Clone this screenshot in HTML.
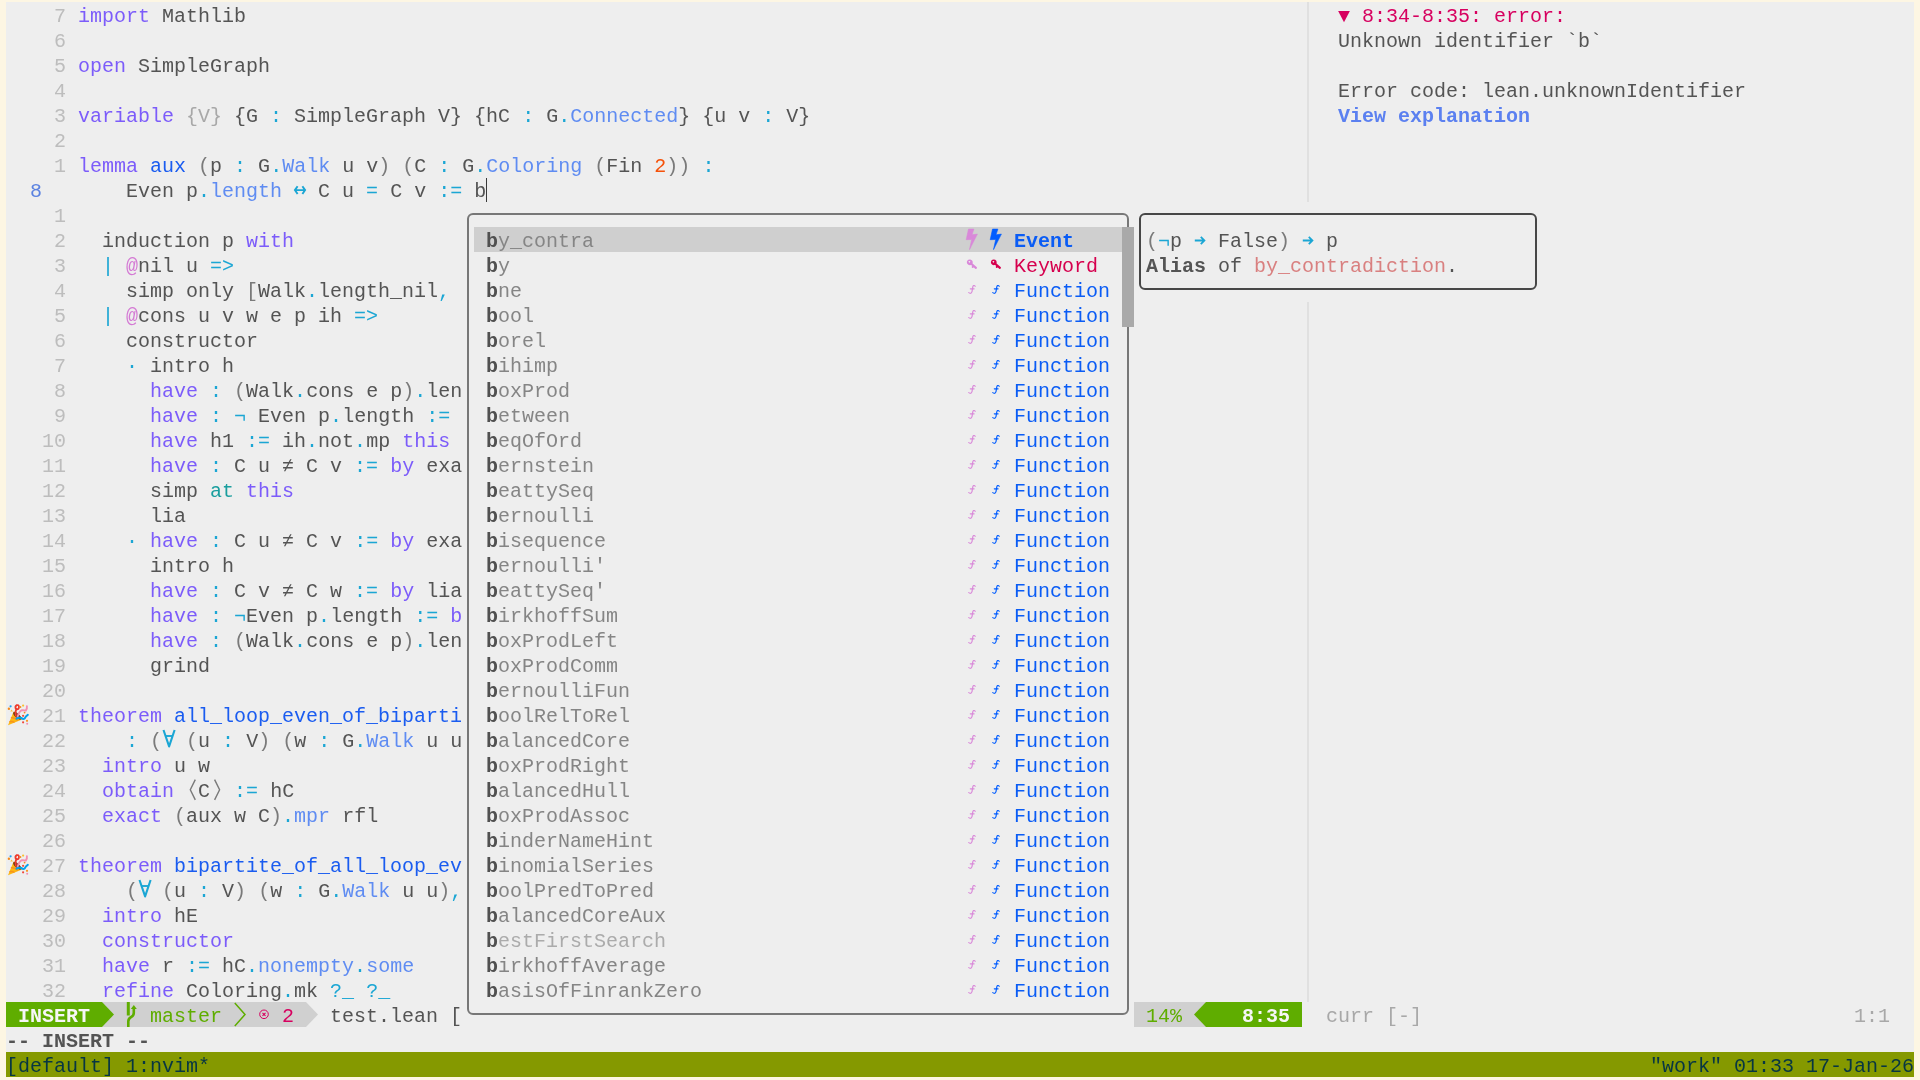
<!DOCTYPE html><html><head><meta charset="utf-8"><style>
html,body{margin:0;padding:0}
body{width:1920px;height:1080px;background:#fdf6e3;position:relative;overflow:hidden;font-family:"Liberation Mono",monospace;font-size:20px;-webkit-font-smoothing:antialiased}
#t{position:absolute;left:6px;top:2px;width:1908px;height:1075px;background:#eeeeee}
.r{position:absolute;will-change:transform;height:25px;line-height:25px;padding-top:2px;box-sizing:border-box;white-space:pre;color:#545454}
b{font-weight:normal}
.ov,.blk,.box{position:absolute}.ov{overflow:visible}
.box{border:2px solid #777;border-radius:6px;background:transparent}
.ln{color:#bdbdbd}.cur{color:#5b82e0}
.k{color:#7c5cfa}.d{color:#1a5cf0}.f{color:#5f8cf2}.o{color:#1ba6d4}.p{color:#7a7a7a}.u{color:#a8a8a8}
.N{color:#f5520a}.a{color:#d47ad4}.t{color:#1a9e9e}
.e{color:#d7005f}.vb{color:#5b80f0;font-weight:bold}
.cb{color:#505050;font-weight:bold}.ci{color:#858585}.ci2{color:#ababab}
.ev{color:#0a5cf5;font-weight:bold}.kw{color:#d6004e}.fn{color:#0a5cf5}
.B{font-weight:bold}.rr{color:#d98080}
.sw{color:#f6f6f6;font-weight:bold}.sg{color:#5fad00}.sr{color:#d7005f}.sx{color:#a8a8a8}
.tm{color:#073642}
</style></head><body><div id="t"></div>
<div class="r" style="left:78px;top:2px"><b class="k">import</b> Mathlib</div>
<div class="r" style="left:78px;top:52px"><b class="k">open</b> SimpleGraph</div>
<div class="r" style="left:78px;top:102px"><b class="k">variable</b> <b class="u">{V}</b> {G <b class="o">:</b> SimpleGraph V} {hC <b class="o">:</b> G<b class="o">.</b><b class="f">Connected</b>} {u v <b class="o">:</b> V}</div>
<div class="r" style="left:78px;top:152px"><b class="k">lemma</b> <b class="d">aux</b> <b class="p">(</b>p <b class="o">:</b> G<b class="o">.</b><b class="f">Walk</b> u v<b class="p">)</b> <b class="p">(</b>C <b class="o">:</b> G<b class="o">.</b><b class="f">Coloring</b> <b class="p">(</b>Fin <b class="N">2</b><b class="p">))</b> <b class="o">:</b></div>
<div class="r" style="left:78px;top:177px">    Even p<b class="o">.</b><b class="f">length</b> <b class="o"> </b> C u <b class="o">=</b> C v <b class="o">:=</b> b</div>
<div class="r" style="left:78px;top:227px">  induction p <b class="k">with</b></div>
<div class="r" style="left:78px;top:252px">  <b class="o">|</b> <b class="a">@</b>nil u <b class="o">=&gt;</b></div>
<div class="r" style="left:78px;top:277px">    simp only <b class="p">[</b>Walk<b class="o">.</b>length_nil<b class="o">,</b></div>
<div class="r" style="left:78px;top:302px">  <b class="o">|</b> <b class="a">@</b>cons u v w e p ih <b class="o">=&gt;</b></div>
<div class="r" style="left:78px;top:327px">    constructor</div>
<div class="r" style="left:78px;top:352px">    <b class="o">·</b> intro h</div>
<div class="r" style="left:78px;top:377px">      <b class="k">have</b> <b class="o">:</b> <b class="p">(</b>Walk<b class="o">.</b>cons e p<b class="p">)</b><b class="o">.</b>len</div>
<div class="r" style="left:78px;top:402px">      <b class="k">have</b> <b class="o">:</b> <b class="o">¬</b> Even p<b class="o">.</b>length <b class="o">:=</b></div>
<div class="r" style="left:78px;top:427px">      <b class="k">have</b> h1 <b class="o">:=</b> ih<b class="o">.</b>not<b class="o">.</b>mp <b class="k">this</b></div>
<div class="r" style="left:78px;top:452px">      <b class="k">have</b> <b class="o">:</b> C u ≠ C v <b class="o">:=</b> <b class="k">by</b> exa</div>
<div class="r" style="left:78px;top:477px">      simp <b class="t">at</b> <b class="k">this</b></div>
<div class="r" style="left:78px;top:502px">      lia</div>
<div class="r" style="left:78px;top:527px">    <b class="o">·</b> <b class="k">have</b> <b class="o">:</b> C u ≠ C v <b class="o">:=</b> <b class="k">by</b> exa</div>
<div class="r" style="left:78px;top:552px">      intro h</div>
<div class="r" style="left:78px;top:577px">      <b class="k">have</b> <b class="o">:</b> C v ≠ C w <b class="o">:=</b> <b class="k">by</b> lia</div>
<div class="r" style="left:78px;top:602px">      <b class="k">have</b> <b class="o">:</b> <b class="o">¬</b>Even p<b class="o">.</b>length <b class="o">:=</b> <b class="k">b</b></div>
<div class="r" style="left:78px;top:627px">      <b class="k">have</b> <b class="o">:</b> <b class="p">(</b>Walk<b class="o">.</b>cons e p<b class="p">)</b><b class="o">.</b>len</div>
<div class="r" style="left:78px;top:652px">      grind</div>
<div class="r" style="left:78px;top:702px"><b class="k">theorem</b> <b class="d">all_loop_even_of_biparti</b></div>
<div class="r" style="left:78px;top:727px">    <b class="o">:</b> <b class="p">(</b>  <b class="p">(</b>u <b class="o">:</b> V<b class="p">)</b> <b class="p">(</b>w <b class="o">:</b> G<b class="o">.</b><b class="f">Walk</b> u u</div>
<div class="r" style="left:78px;top:752px">  <b class="k">intro</b> u w</div>
<div class="r" style="left:78px;top:777px">  <b class="k">obtain</b> <b class="p"> </b>C<b class="p"> </b> <b class="o">:=</b> hC</div>
<div class="r" style="left:78px;top:802px">  <b class="k">exact</b> <b class="p">(</b>aux w C<b class="p">)</b><b class="o">.</b><b class="f">mpr</b> rfl</div>
<div class="r" style="left:78px;top:852px"><b class="k">theorem</b> <b class="d">bipartite_of_all_loop_ev</b></div>
<div class="r" style="left:78px;top:877px">    <b class="p">(</b>  <b class="p">(</b>u <b class="o">:</b> V<b class="p">)</b> <b class="p">(</b>w <b class="o">:</b> G<b class="o">.</b><b class="f">Walk</b> u u<b class="p">)</b><b class="o">,</b></div>
<div class="r" style="left:78px;top:902px">  <b class="k">intro</b> hE</div>
<div class="r" style="left:78px;top:927px">  <b class="k">constructor</b></div>
<div class="r" style="left:78px;top:952px">  <b class="k">have</b> r <b class="o">:=</b> hC<b class="o">.</b><b class="f">nonempty</b><b class="o">.</b><b class="f">some</b></div>
<div class="r" style="left:78px;top:977px">  <b class="k">refine</b> Coloring<b class="o">.</b>mk <b class="o">?_</b> <b class="o">?_</b></div>
<div class="r ln" style="left:54px;top:2px">7</div>
<div class="r ln" style="left:54px;top:27px">6</div>
<div class="r ln" style="left:54px;top:52px">5</div>
<div class="r ln" style="left:54px;top:77px">4</div>
<div class="r ln" style="left:54px;top:102px">3</div>
<div class="r ln" style="left:54px;top:127px">2</div>
<div class="r ln" style="left:54px;top:152px">1</div>
<div class="r ln" style="left:54px;top:202px">1</div>
<div class="r ln" style="left:54px;top:227px">2</div>
<div class="r ln" style="left:54px;top:252px">3</div>
<div class="r ln" style="left:54px;top:277px">4</div>
<div class="r ln" style="left:54px;top:302px">5</div>
<div class="r ln" style="left:54px;top:327px">6</div>
<div class="r ln" style="left:54px;top:352px">7</div>
<div class="r ln" style="left:54px;top:377px">8</div>
<div class="r ln" style="left:54px;top:402px">9</div>
<div class="r ln" style="left:42px;top:427px">10</div>
<div class="r ln" style="left:42px;top:452px">11</div>
<div class="r ln" style="left:42px;top:477px">12</div>
<div class="r ln" style="left:42px;top:502px">13</div>
<div class="r ln" style="left:42px;top:527px">14</div>
<div class="r ln" style="left:42px;top:552px">15</div>
<div class="r ln" style="left:42px;top:577px">16</div>
<div class="r ln" style="left:42px;top:602px">17</div>
<div class="r ln" style="left:42px;top:627px">18</div>
<div class="r ln" style="left:42px;top:652px">19</div>
<div class="r ln" style="left:42px;top:677px">20</div>
<div class="r ln" style="left:42px;top:702px">21</div>
<div class="r ln" style="left:42px;top:727px">22</div>
<div class="r ln" style="left:42px;top:752px">23</div>
<div class="r ln" style="left:42px;top:777px">24</div>
<div class="r ln" style="left:42px;top:802px">25</div>
<div class="r ln" style="left:42px;top:827px">26</div>
<div class="r ln" style="left:42px;top:852px">27</div>
<div class="r ln" style="left:42px;top:877px">28</div>
<div class="r ln" style="left:42px;top:902px">29</div>
<div class="r ln" style="left:42px;top:927px">30</div>
<div class="r ln" style="left:42px;top:952px">31</div>
<div class="r ln" style="left:42px;top:977px">32</div>
<div class="r cur" style="left:30px;top:177px">8</div>
<svg class="ov" style="left:162px;top:727px;" width="12" height="25" viewBox="0 0 12 25"><path d="M1.5 3 L7.1 19.4 L12.6 3" fill="none" stroke="#1ba6d4" stroke-width="2.1" stroke-linejoin="round"/><path d="M3.8 9 H10" stroke="#1ba6d4" stroke-width="1.9"/></svg>
<svg class="ov" style="left:138px;top:877px;" width="12" height="25" viewBox="0 0 12 25"><path d="M1.5 3 L7.1 19.4 L12.6 3" fill="none" stroke="#1ba6d4" stroke-width="2.1" stroke-linejoin="round"/><path d="M3.8 9 H10" stroke="#1ba6d4" stroke-width="1.9"/></svg>
<svg class="ov" style="left:186px;top:777px;" width="12" height="25" viewBox="0 0 12 25"><path d="M9.3 2.6 L4.3 12.75 L9.3 22.9" fill="none" stroke="#7a7a7a" stroke-width="1.4"/></svg>
<svg class="ov" style="left:210px;top:777px;" width="12" height="25" viewBox="0 0 12 25"><path d="M4.6 2.6 L9.6 12.75 L4.6 22.9" fill="none" stroke="#7a7a7a" stroke-width="1.4"/></svg>
<svg class="ov" style="left:294px;top:177px;" width="12" height="25" viewBox="0 0 12 25"><path d="M3.6 9.2 L0.9 13.1 L3.6 17 M8.4 9.2 L11.1 13.1 L8.4 17 M1.2 13.1 H10.8" fill="none" stroke="#1ba6d4" stroke-width="1.9"/></svg>
<svg class="ov" style="left:1194px;top:227px;" width="12" height="25" viewBox="0 0 12 25"><path d="M0.8 13.5 H10.3 M6.8 9.9 L10.4 13.5 L6.8 17.1" fill="none" stroke="#1ba6d4" stroke-width="1.8"/></svg>
<svg class="ov" style="left:1302px;top:227px;" width="12" height="25" viewBox="0 0 12 25"><path d="M0.8 13.5 H10.3 M6.8 9.9 L10.4 13.5 L6.8 17.1" fill="none" stroke="#1ba6d4" stroke-width="1.8"/></svg>
<div class="blk" style="left:486px;top:178px;width:1px;height:24px;background:#3a3a3a"></div>
<svg class="ov" style="left:6px;top:702px;" width="25" height="25" viewBox="0 0 25 25">
<path d="M2 23.2 L7.6 9.6 Q12.6 11.5 16 17.6 Z" fill="#fdb813"/>
<path d="M3.4 19.8 Q6 19 8.5 20.3 M4.9 15.8 Q8.5 15 11.8 18.5" stroke="#f7931e" stroke-width="1.5" fill="none"/>
<ellipse cx="11.3" cy="13.8" rx="5.2" ry="2.1" transform="rotate(43 11.3 13.8)" fill="#6d3b16"/>
<path d="M9.8 13.5 Q9 10 10.2 7.5 Q8.5 4.5 10.5 3.2 Q12.8 2.6 13 5 Q12.8 7.5 10.8 7.2" stroke="#ee3a2c" stroke-width="1.8" fill="none" stroke-linecap="round"/>
<path d="M11.5 15 Q13 9.5 15.5 8.3 Q18 8 19.8 8.6 Q21.3 7 20.9 4.2" stroke="#f48fb1" stroke-width="1.9" fill="none" stroke-linecap="round"/>
<path d="M10.5 16.6 Q13 15.3 15 15.9 Q17.3 17.6 18.6 16.4 Q19.8 14.2 21.8 12.9" stroke="#03a1ec" stroke-width="2" fill="none" stroke-linecap="round"/>
<circle cx="4.6" cy="4.3" r="1.1" fill="#1e9ff0"/>
<circle cx="2.9" cy="6.8" r="1.2" fill="#f58b1e"/>
<path d="M4.3 9.6 L5.6 7.6 L6.9 9.6 Z" fill="#fbc02d"/>
<circle cx="14.4" cy="5.1" r="1" fill="#f58b1e"/>
<circle cx="17.1" cy="3.6" r="1.1" fill="#fbc02d"/>
<circle cx="18.6" cy="10.6" r="0.9" fill="#f58b1e"/>
<circle cx="17.1" cy="13.8" r="1.1" fill="#ef4a3d"/>
<circle cx="17.1" cy="20.3" r="1.1" fill="#ef4a3d"/>
<circle cx="21" cy="18.8" r="1.1" fill="#f7901e"/>
<circle cx="21.2" cy="21.8" r="1" fill="#f28bb5"/>
</svg>
<svg class="ov" style="left:6px;top:852px;" width="25" height="25" viewBox="0 0 25 25">
<path d="M2 23.2 L7.6 9.6 Q12.6 11.5 16 17.6 Z" fill="#fdb813"/>
<path d="M3.4 19.8 Q6 19 8.5 20.3 M4.9 15.8 Q8.5 15 11.8 18.5" stroke="#f7931e" stroke-width="1.5" fill="none"/>
<ellipse cx="11.3" cy="13.8" rx="5.2" ry="2.1" transform="rotate(43 11.3 13.8)" fill="#6d3b16"/>
<path d="M9.8 13.5 Q9 10 10.2 7.5 Q8.5 4.5 10.5 3.2 Q12.8 2.6 13 5 Q12.8 7.5 10.8 7.2" stroke="#ee3a2c" stroke-width="1.8" fill="none" stroke-linecap="round"/>
<path d="M11.5 15 Q13 9.5 15.5 8.3 Q18 8 19.8 8.6 Q21.3 7 20.9 4.2" stroke="#f48fb1" stroke-width="1.9" fill="none" stroke-linecap="round"/>
<path d="M10.5 16.6 Q13 15.3 15 15.9 Q17.3 17.6 18.6 16.4 Q19.8 14.2 21.8 12.9" stroke="#03a1ec" stroke-width="2" fill="none" stroke-linecap="round"/>
<circle cx="4.6" cy="4.3" r="1.1" fill="#1e9ff0"/>
<circle cx="2.9" cy="6.8" r="1.2" fill="#f58b1e"/>
<path d="M4.3 9.6 L5.6 7.6 L6.9 9.6 Z" fill="#fbc02d"/>
<circle cx="14.4" cy="5.1" r="1" fill="#f58b1e"/>
<circle cx="17.1" cy="3.6" r="1.1" fill="#fbc02d"/>
<circle cx="18.6" cy="10.6" r="0.9" fill="#f58b1e"/>
<circle cx="17.1" cy="13.8" r="1.1" fill="#ef4a3d"/>
<circle cx="17.1" cy="20.3" r="1.1" fill="#ef4a3d"/>
<circle cx="21" cy="18.8" r="1.1" fill="#f7901e"/>
<circle cx="21.2" cy="21.8" r="1" fill="#f28bb5"/>
</svg>
<div class="blk" style="left:1307px;top:2px;width:2px;height:200px;background:#e0e0e0"></div>
<div class="blk" style="left:1307px;top:302px;width:2px;height:700px;background:#e0e0e0"></div>
<div class="r" style="left:1338px;top:2px"><b class="e">▼ 8:34-8:35: error:</b></div>
<div class="r" style="left:1338px;top:27px">Unknown identifier `b`</div>
<div class="r" style="left:1338px;top:77px">Error code: lean.unknownIdentifier</div>
<div class="r" style="left:1338px;top:102px"><b class="vb">View explanation</b></div>
<div class="blk" style="left:462px;top:202px;width:672px;height:825px;background:#eeeeee"></div>
<div class="box" style="left:467px;top:213px;width:658px;height:798px;border-color:#777777"></div>
<div class="blk" style="left:474px;top:227px;width:648px;height:25px;background:#cfcfcf"></div>
<div class="blk" style="left:1122px;top:227px;width:12px;height:100px;background:#a9a9a9"></div>
<div class="r" style="left:486px;top:227px"><b class="cb">b</b><b class="ci">y_contra</b></div>
<div class="r" style="left:1014px;top:227px"><b class="ev">Event</b></div>
<div class="r" style="left:486px;top:252px"><b class="cb">b</b><b class="ci">y</b></div>
<div class="r" style="left:1014px;top:252px"><b class="kw">Keyword</b></div>
<div class="r" style="left:486px;top:277px"><b class="cb">b</b><b class="ci">ne</b></div>
<div class="r" style="left:1014px;top:277px"><b class="fn">Function</b></div>
<div class="r" style="left:486px;top:302px"><b class="cb">b</b><b class="ci">ool</b></div>
<div class="r" style="left:1014px;top:302px"><b class="fn">Function</b></div>
<div class="r" style="left:486px;top:327px"><b class="cb">b</b><b class="ci">orel</b></div>
<div class="r" style="left:1014px;top:327px"><b class="fn">Function</b></div>
<div class="r" style="left:486px;top:352px"><b class="cb">b</b><b class="ci">ihimp</b></div>
<div class="r" style="left:1014px;top:352px"><b class="fn">Function</b></div>
<div class="r" style="left:486px;top:377px"><b class="cb">b</b><b class="ci">oxProd</b></div>
<div class="r" style="left:1014px;top:377px"><b class="fn">Function</b></div>
<div class="r" style="left:486px;top:402px"><b class="cb">b</b><b class="ci">etween</b></div>
<div class="r" style="left:1014px;top:402px"><b class="fn">Function</b></div>
<div class="r" style="left:486px;top:427px"><b class="cb">b</b><b class="ci">eqOfOrd</b></div>
<div class="r" style="left:1014px;top:427px"><b class="fn">Function</b></div>
<div class="r" style="left:486px;top:452px"><b class="cb">b</b><b class="ci">ernstein</b></div>
<div class="r" style="left:1014px;top:452px"><b class="fn">Function</b></div>
<div class="r" style="left:486px;top:477px"><b class="cb">b</b><b class="ci">eattySeq</b></div>
<div class="r" style="left:1014px;top:477px"><b class="fn">Function</b></div>
<div class="r" style="left:486px;top:502px"><b class="cb">b</b><b class="ci">ernoulli</b></div>
<div class="r" style="left:1014px;top:502px"><b class="fn">Function</b></div>
<div class="r" style="left:486px;top:527px"><b class="cb">b</b><b class="ci">isequence</b></div>
<div class="r" style="left:1014px;top:527px"><b class="fn">Function</b></div>
<div class="r" style="left:486px;top:552px"><b class="cb">b</b><b class="ci">ernoulli&#x27;</b></div>
<div class="r" style="left:1014px;top:552px"><b class="fn">Function</b></div>
<div class="r" style="left:486px;top:577px"><b class="cb">b</b><b class="ci">eattySeq&#x27;</b></div>
<div class="r" style="left:1014px;top:577px"><b class="fn">Function</b></div>
<div class="r" style="left:486px;top:602px"><b class="cb">b</b><b class="ci">irkhoffSum</b></div>
<div class="r" style="left:1014px;top:602px"><b class="fn">Function</b></div>
<div class="r" style="left:486px;top:627px"><b class="cb">b</b><b class="ci">oxProdLeft</b></div>
<div class="r" style="left:1014px;top:627px"><b class="fn">Function</b></div>
<div class="r" style="left:486px;top:652px"><b class="cb">b</b><b class="ci">oxProdComm</b></div>
<div class="r" style="left:1014px;top:652px"><b class="fn">Function</b></div>
<div class="r" style="left:486px;top:677px"><b class="cb">b</b><b class="ci">ernoulliFun</b></div>
<div class="r" style="left:1014px;top:677px"><b class="fn">Function</b></div>
<div class="r" style="left:486px;top:702px"><b class="cb">b</b><b class="ci">oolRelToRel</b></div>
<div class="r" style="left:1014px;top:702px"><b class="fn">Function</b></div>
<div class="r" style="left:486px;top:727px"><b class="cb">b</b><b class="ci">alancedCore</b></div>
<div class="r" style="left:1014px;top:727px"><b class="fn">Function</b></div>
<div class="r" style="left:486px;top:752px"><b class="cb">b</b><b class="ci">oxProdRight</b></div>
<div class="r" style="left:1014px;top:752px"><b class="fn">Function</b></div>
<div class="r" style="left:486px;top:777px"><b class="cb">b</b><b class="ci">alancedHull</b></div>
<div class="r" style="left:1014px;top:777px"><b class="fn">Function</b></div>
<div class="r" style="left:486px;top:802px"><b class="cb">b</b><b class="ci">oxProdAssoc</b></div>
<div class="r" style="left:1014px;top:802px"><b class="fn">Function</b></div>
<div class="r" style="left:486px;top:827px"><b class="cb">b</b><b class="ci">inderNameHint</b></div>
<div class="r" style="left:1014px;top:827px"><b class="fn">Function</b></div>
<div class="r" style="left:486px;top:852px"><b class="cb">b</b><b class="ci">inomialSeries</b></div>
<div class="r" style="left:1014px;top:852px"><b class="fn">Function</b></div>
<div class="r" style="left:486px;top:877px"><b class="cb">b</b><b class="ci">oolPredToPred</b></div>
<div class="r" style="left:1014px;top:877px"><b class="fn">Function</b></div>
<div class="r" style="left:486px;top:902px"><b class="cb">b</b><b class="ci">alancedCoreAux</b></div>
<div class="r" style="left:1014px;top:902px"><b class="fn">Function</b></div>
<div class="r" style="left:486px;top:927px"><b class="cb">b</b><b class="ci2">estFirstSearch</b></div>
<div class="r" style="left:1014px;top:927px"><b class="fn">Function</b></div>
<div class="r" style="left:486px;top:952px"><b class="cb">b</b><b class="ci">irkhoffAverage</b></div>
<div class="r" style="left:1014px;top:952px"><b class="fn">Function</b></div>
<div class="r" style="left:486px;top:977px"><b class="cb">b</b><b class="ci">asisOfFinrankZero</b></div>
<div class="r" style="left:1014px;top:977px"><b class="fn">Function</b></div>
<svg class="ov" style="left:966px;top:227px" width="12" height="25" viewBox="0 0 12 25"><path d="M2.5 2.1 L7.9 2.1 L6 7.8 L11.4 7.1 L3.5 22.6 L5.7 12.5 L0.2 12.7 Z" fill="#d988d9" stroke="#d988d9" stroke-width="0.6" stroke-linejoin="round"/></svg>
<svg class="ov" style="left:990px;top:227px" width="12" height="25" viewBox="0 0 12 25"><path d="M2.5 2.1 L7.9 2.1 L6 7.8 L11.4 7.1 L3.5 22.6 L5.7 12.5 L0.2 12.7 Z" fill="#005cff" stroke="#005cff" stroke-width="0.6" stroke-linejoin="round"/></svg>
<svg class="ov" style="left:966px;top:252px" width="12" height="25" viewBox="0 0 12 25"><path fill-rule="evenodd" d="M3.8 7.4 A2.9 2.9 0 1 1 3.79 7.4 Z M3.4 8.9 A0.8 0.8 0 1 0 3.41 8.9 Z" fill="#d988d9"/><path d="M5 11.5 L9.9 15.9 M7.6 13.8 L6.8 14.9" fill="none" stroke="#d988d9" stroke-width="2.1" stroke-linecap="round"/></svg>
<svg class="ov" style="left:990px;top:252px" width="12" height="25" viewBox="0 0 12 25"><path fill-rule="evenodd" d="M3.8 7.4 A2.9 2.9 0 1 1 3.79 7.4 Z M3.4 8.9 A0.8 0.8 0 1 0 3.41 8.9 Z" fill="#d6004e"/><path d="M5 11.5 L9.9 15.9 M7.6 13.8 L6.8 14.9" fill="none" stroke="#d6004e" stroke-width="2.1" stroke-linecap="round"/></svg>
<svg class="ov" style="left:966px;top:277px" width="12" height="25" viewBox="0 0 12 25"><path d="M9.2 9.3 Q8.6 8.3 7.6 8.6 Q6.9 9 6.7 10.3 L6 14.6 Q5.6 16.4 4.2 16.3 Q3.3 16.2 2.8 15.5 M4.3 11.8 H8.1" fill="none" stroke="#d988d9" stroke-width="1.15" stroke-linecap="round"/></svg>
<svg class="ov" style="left:990px;top:277px" width="12" height="25" viewBox="0 0 12 25"><path d="M9.2 9.3 Q8.6 8.3 7.6 8.6 Q6.9 9 6.7 10.3 L6 14.6 Q5.6 16.4 4.2 16.3 Q3.3 16.2 2.8 15.5 M4.3 11.8 H8.1" fill="none" stroke="#005cff" stroke-width="1.15" stroke-linecap="round"/></svg>
<svg class="ov" style="left:966px;top:302px" width="12" height="25" viewBox="0 0 12 25"><path d="M9.2 9.3 Q8.6 8.3 7.6 8.6 Q6.9 9 6.7 10.3 L6 14.6 Q5.6 16.4 4.2 16.3 Q3.3 16.2 2.8 15.5 M4.3 11.8 H8.1" fill="none" stroke="#d988d9" stroke-width="1.15" stroke-linecap="round"/></svg>
<svg class="ov" style="left:990px;top:302px" width="12" height="25" viewBox="0 0 12 25"><path d="M9.2 9.3 Q8.6 8.3 7.6 8.6 Q6.9 9 6.7 10.3 L6 14.6 Q5.6 16.4 4.2 16.3 Q3.3 16.2 2.8 15.5 M4.3 11.8 H8.1" fill="none" stroke="#005cff" stroke-width="1.15" stroke-linecap="round"/></svg>
<svg class="ov" style="left:966px;top:327px" width="12" height="25" viewBox="0 0 12 25"><path d="M9.2 9.3 Q8.6 8.3 7.6 8.6 Q6.9 9 6.7 10.3 L6 14.6 Q5.6 16.4 4.2 16.3 Q3.3 16.2 2.8 15.5 M4.3 11.8 H8.1" fill="none" stroke="#d988d9" stroke-width="1.15" stroke-linecap="round"/></svg>
<svg class="ov" style="left:990px;top:327px" width="12" height="25" viewBox="0 0 12 25"><path d="M9.2 9.3 Q8.6 8.3 7.6 8.6 Q6.9 9 6.7 10.3 L6 14.6 Q5.6 16.4 4.2 16.3 Q3.3 16.2 2.8 15.5 M4.3 11.8 H8.1" fill="none" stroke="#005cff" stroke-width="1.15" stroke-linecap="round"/></svg>
<svg class="ov" style="left:966px;top:352px" width="12" height="25" viewBox="0 0 12 25"><path d="M9.2 9.3 Q8.6 8.3 7.6 8.6 Q6.9 9 6.7 10.3 L6 14.6 Q5.6 16.4 4.2 16.3 Q3.3 16.2 2.8 15.5 M4.3 11.8 H8.1" fill="none" stroke="#d988d9" stroke-width="1.15" stroke-linecap="round"/></svg>
<svg class="ov" style="left:990px;top:352px" width="12" height="25" viewBox="0 0 12 25"><path d="M9.2 9.3 Q8.6 8.3 7.6 8.6 Q6.9 9 6.7 10.3 L6 14.6 Q5.6 16.4 4.2 16.3 Q3.3 16.2 2.8 15.5 M4.3 11.8 H8.1" fill="none" stroke="#005cff" stroke-width="1.15" stroke-linecap="round"/></svg>
<svg class="ov" style="left:966px;top:377px" width="12" height="25" viewBox="0 0 12 25"><path d="M9.2 9.3 Q8.6 8.3 7.6 8.6 Q6.9 9 6.7 10.3 L6 14.6 Q5.6 16.4 4.2 16.3 Q3.3 16.2 2.8 15.5 M4.3 11.8 H8.1" fill="none" stroke="#d988d9" stroke-width="1.15" stroke-linecap="round"/></svg>
<svg class="ov" style="left:990px;top:377px" width="12" height="25" viewBox="0 0 12 25"><path d="M9.2 9.3 Q8.6 8.3 7.6 8.6 Q6.9 9 6.7 10.3 L6 14.6 Q5.6 16.4 4.2 16.3 Q3.3 16.2 2.8 15.5 M4.3 11.8 H8.1" fill="none" stroke="#005cff" stroke-width="1.15" stroke-linecap="round"/></svg>
<svg class="ov" style="left:966px;top:402px" width="12" height="25" viewBox="0 0 12 25"><path d="M9.2 9.3 Q8.6 8.3 7.6 8.6 Q6.9 9 6.7 10.3 L6 14.6 Q5.6 16.4 4.2 16.3 Q3.3 16.2 2.8 15.5 M4.3 11.8 H8.1" fill="none" stroke="#d988d9" stroke-width="1.15" stroke-linecap="round"/></svg>
<svg class="ov" style="left:990px;top:402px" width="12" height="25" viewBox="0 0 12 25"><path d="M9.2 9.3 Q8.6 8.3 7.6 8.6 Q6.9 9 6.7 10.3 L6 14.6 Q5.6 16.4 4.2 16.3 Q3.3 16.2 2.8 15.5 M4.3 11.8 H8.1" fill="none" stroke="#005cff" stroke-width="1.15" stroke-linecap="round"/></svg>
<svg class="ov" style="left:966px;top:427px" width="12" height="25" viewBox="0 0 12 25"><path d="M9.2 9.3 Q8.6 8.3 7.6 8.6 Q6.9 9 6.7 10.3 L6 14.6 Q5.6 16.4 4.2 16.3 Q3.3 16.2 2.8 15.5 M4.3 11.8 H8.1" fill="none" stroke="#d988d9" stroke-width="1.15" stroke-linecap="round"/></svg>
<svg class="ov" style="left:990px;top:427px" width="12" height="25" viewBox="0 0 12 25"><path d="M9.2 9.3 Q8.6 8.3 7.6 8.6 Q6.9 9 6.7 10.3 L6 14.6 Q5.6 16.4 4.2 16.3 Q3.3 16.2 2.8 15.5 M4.3 11.8 H8.1" fill="none" stroke="#005cff" stroke-width="1.15" stroke-linecap="round"/></svg>
<svg class="ov" style="left:966px;top:452px" width="12" height="25" viewBox="0 0 12 25"><path d="M9.2 9.3 Q8.6 8.3 7.6 8.6 Q6.9 9 6.7 10.3 L6 14.6 Q5.6 16.4 4.2 16.3 Q3.3 16.2 2.8 15.5 M4.3 11.8 H8.1" fill="none" stroke="#d988d9" stroke-width="1.15" stroke-linecap="round"/></svg>
<svg class="ov" style="left:990px;top:452px" width="12" height="25" viewBox="0 0 12 25"><path d="M9.2 9.3 Q8.6 8.3 7.6 8.6 Q6.9 9 6.7 10.3 L6 14.6 Q5.6 16.4 4.2 16.3 Q3.3 16.2 2.8 15.5 M4.3 11.8 H8.1" fill="none" stroke="#005cff" stroke-width="1.15" stroke-linecap="round"/></svg>
<svg class="ov" style="left:966px;top:477px" width="12" height="25" viewBox="0 0 12 25"><path d="M9.2 9.3 Q8.6 8.3 7.6 8.6 Q6.9 9 6.7 10.3 L6 14.6 Q5.6 16.4 4.2 16.3 Q3.3 16.2 2.8 15.5 M4.3 11.8 H8.1" fill="none" stroke="#d988d9" stroke-width="1.15" stroke-linecap="round"/></svg>
<svg class="ov" style="left:990px;top:477px" width="12" height="25" viewBox="0 0 12 25"><path d="M9.2 9.3 Q8.6 8.3 7.6 8.6 Q6.9 9 6.7 10.3 L6 14.6 Q5.6 16.4 4.2 16.3 Q3.3 16.2 2.8 15.5 M4.3 11.8 H8.1" fill="none" stroke="#005cff" stroke-width="1.15" stroke-linecap="round"/></svg>
<svg class="ov" style="left:966px;top:502px" width="12" height="25" viewBox="0 0 12 25"><path d="M9.2 9.3 Q8.6 8.3 7.6 8.6 Q6.9 9 6.7 10.3 L6 14.6 Q5.6 16.4 4.2 16.3 Q3.3 16.2 2.8 15.5 M4.3 11.8 H8.1" fill="none" stroke="#d988d9" stroke-width="1.15" stroke-linecap="round"/></svg>
<svg class="ov" style="left:990px;top:502px" width="12" height="25" viewBox="0 0 12 25"><path d="M9.2 9.3 Q8.6 8.3 7.6 8.6 Q6.9 9 6.7 10.3 L6 14.6 Q5.6 16.4 4.2 16.3 Q3.3 16.2 2.8 15.5 M4.3 11.8 H8.1" fill="none" stroke="#005cff" stroke-width="1.15" stroke-linecap="round"/></svg>
<svg class="ov" style="left:966px;top:527px" width="12" height="25" viewBox="0 0 12 25"><path d="M9.2 9.3 Q8.6 8.3 7.6 8.6 Q6.9 9 6.7 10.3 L6 14.6 Q5.6 16.4 4.2 16.3 Q3.3 16.2 2.8 15.5 M4.3 11.8 H8.1" fill="none" stroke="#d988d9" stroke-width="1.15" stroke-linecap="round"/></svg>
<svg class="ov" style="left:990px;top:527px" width="12" height="25" viewBox="0 0 12 25"><path d="M9.2 9.3 Q8.6 8.3 7.6 8.6 Q6.9 9 6.7 10.3 L6 14.6 Q5.6 16.4 4.2 16.3 Q3.3 16.2 2.8 15.5 M4.3 11.8 H8.1" fill="none" stroke="#005cff" stroke-width="1.15" stroke-linecap="round"/></svg>
<svg class="ov" style="left:966px;top:552px" width="12" height="25" viewBox="0 0 12 25"><path d="M9.2 9.3 Q8.6 8.3 7.6 8.6 Q6.9 9 6.7 10.3 L6 14.6 Q5.6 16.4 4.2 16.3 Q3.3 16.2 2.8 15.5 M4.3 11.8 H8.1" fill="none" stroke="#d988d9" stroke-width="1.15" stroke-linecap="round"/></svg>
<svg class="ov" style="left:990px;top:552px" width="12" height="25" viewBox="0 0 12 25"><path d="M9.2 9.3 Q8.6 8.3 7.6 8.6 Q6.9 9 6.7 10.3 L6 14.6 Q5.6 16.4 4.2 16.3 Q3.3 16.2 2.8 15.5 M4.3 11.8 H8.1" fill="none" stroke="#005cff" stroke-width="1.15" stroke-linecap="round"/></svg>
<svg class="ov" style="left:966px;top:577px" width="12" height="25" viewBox="0 0 12 25"><path d="M9.2 9.3 Q8.6 8.3 7.6 8.6 Q6.9 9 6.7 10.3 L6 14.6 Q5.6 16.4 4.2 16.3 Q3.3 16.2 2.8 15.5 M4.3 11.8 H8.1" fill="none" stroke="#d988d9" stroke-width="1.15" stroke-linecap="round"/></svg>
<svg class="ov" style="left:990px;top:577px" width="12" height="25" viewBox="0 0 12 25"><path d="M9.2 9.3 Q8.6 8.3 7.6 8.6 Q6.9 9 6.7 10.3 L6 14.6 Q5.6 16.4 4.2 16.3 Q3.3 16.2 2.8 15.5 M4.3 11.8 H8.1" fill="none" stroke="#005cff" stroke-width="1.15" stroke-linecap="round"/></svg>
<svg class="ov" style="left:966px;top:602px" width="12" height="25" viewBox="0 0 12 25"><path d="M9.2 9.3 Q8.6 8.3 7.6 8.6 Q6.9 9 6.7 10.3 L6 14.6 Q5.6 16.4 4.2 16.3 Q3.3 16.2 2.8 15.5 M4.3 11.8 H8.1" fill="none" stroke="#d988d9" stroke-width="1.15" stroke-linecap="round"/></svg>
<svg class="ov" style="left:990px;top:602px" width="12" height="25" viewBox="0 0 12 25"><path d="M9.2 9.3 Q8.6 8.3 7.6 8.6 Q6.9 9 6.7 10.3 L6 14.6 Q5.6 16.4 4.2 16.3 Q3.3 16.2 2.8 15.5 M4.3 11.8 H8.1" fill="none" stroke="#005cff" stroke-width="1.15" stroke-linecap="round"/></svg>
<svg class="ov" style="left:966px;top:627px" width="12" height="25" viewBox="0 0 12 25"><path d="M9.2 9.3 Q8.6 8.3 7.6 8.6 Q6.9 9 6.7 10.3 L6 14.6 Q5.6 16.4 4.2 16.3 Q3.3 16.2 2.8 15.5 M4.3 11.8 H8.1" fill="none" stroke="#d988d9" stroke-width="1.15" stroke-linecap="round"/></svg>
<svg class="ov" style="left:990px;top:627px" width="12" height="25" viewBox="0 0 12 25"><path d="M9.2 9.3 Q8.6 8.3 7.6 8.6 Q6.9 9 6.7 10.3 L6 14.6 Q5.6 16.4 4.2 16.3 Q3.3 16.2 2.8 15.5 M4.3 11.8 H8.1" fill="none" stroke="#005cff" stroke-width="1.15" stroke-linecap="round"/></svg>
<svg class="ov" style="left:966px;top:652px" width="12" height="25" viewBox="0 0 12 25"><path d="M9.2 9.3 Q8.6 8.3 7.6 8.6 Q6.9 9 6.7 10.3 L6 14.6 Q5.6 16.4 4.2 16.3 Q3.3 16.2 2.8 15.5 M4.3 11.8 H8.1" fill="none" stroke="#d988d9" stroke-width="1.15" stroke-linecap="round"/></svg>
<svg class="ov" style="left:990px;top:652px" width="12" height="25" viewBox="0 0 12 25"><path d="M9.2 9.3 Q8.6 8.3 7.6 8.6 Q6.9 9 6.7 10.3 L6 14.6 Q5.6 16.4 4.2 16.3 Q3.3 16.2 2.8 15.5 M4.3 11.8 H8.1" fill="none" stroke="#005cff" stroke-width="1.15" stroke-linecap="round"/></svg>
<svg class="ov" style="left:966px;top:677px" width="12" height="25" viewBox="0 0 12 25"><path d="M9.2 9.3 Q8.6 8.3 7.6 8.6 Q6.9 9 6.7 10.3 L6 14.6 Q5.6 16.4 4.2 16.3 Q3.3 16.2 2.8 15.5 M4.3 11.8 H8.1" fill="none" stroke="#d988d9" stroke-width="1.15" stroke-linecap="round"/></svg>
<svg class="ov" style="left:990px;top:677px" width="12" height="25" viewBox="0 0 12 25"><path d="M9.2 9.3 Q8.6 8.3 7.6 8.6 Q6.9 9 6.7 10.3 L6 14.6 Q5.6 16.4 4.2 16.3 Q3.3 16.2 2.8 15.5 M4.3 11.8 H8.1" fill="none" stroke="#005cff" stroke-width="1.15" stroke-linecap="round"/></svg>
<svg class="ov" style="left:966px;top:702px" width="12" height="25" viewBox="0 0 12 25"><path d="M9.2 9.3 Q8.6 8.3 7.6 8.6 Q6.9 9 6.7 10.3 L6 14.6 Q5.6 16.4 4.2 16.3 Q3.3 16.2 2.8 15.5 M4.3 11.8 H8.1" fill="none" stroke="#d988d9" stroke-width="1.15" stroke-linecap="round"/></svg>
<svg class="ov" style="left:990px;top:702px" width="12" height="25" viewBox="0 0 12 25"><path d="M9.2 9.3 Q8.6 8.3 7.6 8.6 Q6.9 9 6.7 10.3 L6 14.6 Q5.6 16.4 4.2 16.3 Q3.3 16.2 2.8 15.5 M4.3 11.8 H8.1" fill="none" stroke="#005cff" stroke-width="1.15" stroke-linecap="round"/></svg>
<svg class="ov" style="left:966px;top:727px" width="12" height="25" viewBox="0 0 12 25"><path d="M9.2 9.3 Q8.6 8.3 7.6 8.6 Q6.9 9 6.7 10.3 L6 14.6 Q5.6 16.4 4.2 16.3 Q3.3 16.2 2.8 15.5 M4.3 11.8 H8.1" fill="none" stroke="#d988d9" stroke-width="1.15" stroke-linecap="round"/></svg>
<svg class="ov" style="left:990px;top:727px" width="12" height="25" viewBox="0 0 12 25"><path d="M9.2 9.3 Q8.6 8.3 7.6 8.6 Q6.9 9 6.7 10.3 L6 14.6 Q5.6 16.4 4.2 16.3 Q3.3 16.2 2.8 15.5 M4.3 11.8 H8.1" fill="none" stroke="#005cff" stroke-width="1.15" stroke-linecap="round"/></svg>
<svg class="ov" style="left:966px;top:752px" width="12" height="25" viewBox="0 0 12 25"><path d="M9.2 9.3 Q8.6 8.3 7.6 8.6 Q6.9 9 6.7 10.3 L6 14.6 Q5.6 16.4 4.2 16.3 Q3.3 16.2 2.8 15.5 M4.3 11.8 H8.1" fill="none" stroke="#d988d9" stroke-width="1.15" stroke-linecap="round"/></svg>
<svg class="ov" style="left:990px;top:752px" width="12" height="25" viewBox="0 0 12 25"><path d="M9.2 9.3 Q8.6 8.3 7.6 8.6 Q6.9 9 6.7 10.3 L6 14.6 Q5.6 16.4 4.2 16.3 Q3.3 16.2 2.8 15.5 M4.3 11.8 H8.1" fill="none" stroke="#005cff" stroke-width="1.15" stroke-linecap="round"/></svg>
<svg class="ov" style="left:966px;top:777px" width="12" height="25" viewBox="0 0 12 25"><path d="M9.2 9.3 Q8.6 8.3 7.6 8.6 Q6.9 9 6.7 10.3 L6 14.6 Q5.6 16.4 4.2 16.3 Q3.3 16.2 2.8 15.5 M4.3 11.8 H8.1" fill="none" stroke="#d988d9" stroke-width="1.15" stroke-linecap="round"/></svg>
<svg class="ov" style="left:990px;top:777px" width="12" height="25" viewBox="0 0 12 25"><path d="M9.2 9.3 Q8.6 8.3 7.6 8.6 Q6.9 9 6.7 10.3 L6 14.6 Q5.6 16.4 4.2 16.3 Q3.3 16.2 2.8 15.5 M4.3 11.8 H8.1" fill="none" stroke="#005cff" stroke-width="1.15" stroke-linecap="round"/></svg>
<svg class="ov" style="left:966px;top:802px" width="12" height="25" viewBox="0 0 12 25"><path d="M9.2 9.3 Q8.6 8.3 7.6 8.6 Q6.9 9 6.7 10.3 L6 14.6 Q5.6 16.4 4.2 16.3 Q3.3 16.2 2.8 15.5 M4.3 11.8 H8.1" fill="none" stroke="#d988d9" stroke-width="1.15" stroke-linecap="round"/></svg>
<svg class="ov" style="left:990px;top:802px" width="12" height="25" viewBox="0 0 12 25"><path d="M9.2 9.3 Q8.6 8.3 7.6 8.6 Q6.9 9 6.7 10.3 L6 14.6 Q5.6 16.4 4.2 16.3 Q3.3 16.2 2.8 15.5 M4.3 11.8 H8.1" fill="none" stroke="#005cff" stroke-width="1.15" stroke-linecap="round"/></svg>
<svg class="ov" style="left:966px;top:827px" width="12" height="25" viewBox="0 0 12 25"><path d="M9.2 9.3 Q8.6 8.3 7.6 8.6 Q6.9 9 6.7 10.3 L6 14.6 Q5.6 16.4 4.2 16.3 Q3.3 16.2 2.8 15.5 M4.3 11.8 H8.1" fill="none" stroke="#d988d9" stroke-width="1.15" stroke-linecap="round"/></svg>
<svg class="ov" style="left:990px;top:827px" width="12" height="25" viewBox="0 0 12 25"><path d="M9.2 9.3 Q8.6 8.3 7.6 8.6 Q6.9 9 6.7 10.3 L6 14.6 Q5.6 16.4 4.2 16.3 Q3.3 16.2 2.8 15.5 M4.3 11.8 H8.1" fill="none" stroke="#005cff" stroke-width="1.15" stroke-linecap="round"/></svg>
<svg class="ov" style="left:966px;top:852px" width="12" height="25" viewBox="0 0 12 25"><path d="M9.2 9.3 Q8.6 8.3 7.6 8.6 Q6.9 9 6.7 10.3 L6 14.6 Q5.6 16.4 4.2 16.3 Q3.3 16.2 2.8 15.5 M4.3 11.8 H8.1" fill="none" stroke="#d988d9" stroke-width="1.15" stroke-linecap="round"/></svg>
<svg class="ov" style="left:990px;top:852px" width="12" height="25" viewBox="0 0 12 25"><path d="M9.2 9.3 Q8.6 8.3 7.6 8.6 Q6.9 9 6.7 10.3 L6 14.6 Q5.6 16.4 4.2 16.3 Q3.3 16.2 2.8 15.5 M4.3 11.8 H8.1" fill="none" stroke="#005cff" stroke-width="1.15" stroke-linecap="round"/></svg>
<svg class="ov" style="left:966px;top:877px" width="12" height="25" viewBox="0 0 12 25"><path d="M9.2 9.3 Q8.6 8.3 7.6 8.6 Q6.9 9 6.7 10.3 L6 14.6 Q5.6 16.4 4.2 16.3 Q3.3 16.2 2.8 15.5 M4.3 11.8 H8.1" fill="none" stroke="#d988d9" stroke-width="1.15" stroke-linecap="round"/></svg>
<svg class="ov" style="left:990px;top:877px" width="12" height="25" viewBox="0 0 12 25"><path d="M9.2 9.3 Q8.6 8.3 7.6 8.6 Q6.9 9 6.7 10.3 L6 14.6 Q5.6 16.4 4.2 16.3 Q3.3 16.2 2.8 15.5 M4.3 11.8 H8.1" fill="none" stroke="#005cff" stroke-width="1.15" stroke-linecap="round"/></svg>
<svg class="ov" style="left:966px;top:902px" width="12" height="25" viewBox="0 0 12 25"><path d="M9.2 9.3 Q8.6 8.3 7.6 8.6 Q6.9 9 6.7 10.3 L6 14.6 Q5.6 16.4 4.2 16.3 Q3.3 16.2 2.8 15.5 M4.3 11.8 H8.1" fill="none" stroke="#d988d9" stroke-width="1.15" stroke-linecap="round"/></svg>
<svg class="ov" style="left:990px;top:902px" width="12" height="25" viewBox="0 0 12 25"><path d="M9.2 9.3 Q8.6 8.3 7.6 8.6 Q6.9 9 6.7 10.3 L6 14.6 Q5.6 16.4 4.2 16.3 Q3.3 16.2 2.8 15.5 M4.3 11.8 H8.1" fill="none" stroke="#005cff" stroke-width="1.15" stroke-linecap="round"/></svg>
<svg class="ov" style="left:966px;top:927px" width="12" height="25" viewBox="0 0 12 25"><path d="M9.2 9.3 Q8.6 8.3 7.6 8.6 Q6.9 9 6.7 10.3 L6 14.6 Q5.6 16.4 4.2 16.3 Q3.3 16.2 2.8 15.5 M4.3 11.8 H8.1" fill="none" stroke="#d988d9" stroke-width="1.15" stroke-linecap="round"/></svg>
<svg class="ov" style="left:990px;top:927px" width="12" height="25" viewBox="0 0 12 25"><path d="M9.2 9.3 Q8.6 8.3 7.6 8.6 Q6.9 9 6.7 10.3 L6 14.6 Q5.6 16.4 4.2 16.3 Q3.3 16.2 2.8 15.5 M4.3 11.8 H8.1" fill="none" stroke="#005cff" stroke-width="1.15" stroke-linecap="round"/></svg>
<svg class="ov" style="left:966px;top:952px" width="12" height="25" viewBox="0 0 12 25"><path d="M9.2 9.3 Q8.6 8.3 7.6 8.6 Q6.9 9 6.7 10.3 L6 14.6 Q5.6 16.4 4.2 16.3 Q3.3 16.2 2.8 15.5 M4.3 11.8 H8.1" fill="none" stroke="#d988d9" stroke-width="1.15" stroke-linecap="round"/></svg>
<svg class="ov" style="left:990px;top:952px" width="12" height="25" viewBox="0 0 12 25"><path d="M9.2 9.3 Q8.6 8.3 7.6 8.6 Q6.9 9 6.7 10.3 L6 14.6 Q5.6 16.4 4.2 16.3 Q3.3 16.2 2.8 15.5 M4.3 11.8 H8.1" fill="none" stroke="#005cff" stroke-width="1.15" stroke-linecap="round"/></svg>
<svg class="ov" style="left:966px;top:977px" width="12" height="25" viewBox="0 0 12 25"><path d="M9.2 9.3 Q8.6 8.3 7.6 8.6 Q6.9 9 6.7 10.3 L6 14.6 Q5.6 16.4 4.2 16.3 Q3.3 16.2 2.8 15.5 M4.3 11.8 H8.1" fill="none" stroke="#d988d9" stroke-width="1.15" stroke-linecap="round"/></svg>
<svg class="ov" style="left:990px;top:977px" width="12" height="25" viewBox="0 0 12 25"><path d="M9.2 9.3 Q8.6 8.3 7.6 8.6 Q6.9 9 6.7 10.3 L6 14.6 Q5.6 16.4 4.2 16.3 Q3.3 16.2 2.8 15.5 M4.3 11.8 H8.1" fill="none" stroke="#005cff" stroke-width="1.15" stroke-linecap="round"/></svg>
<div class="box" style="left:1139px;top:213px;width:394px;height:73px;border-color:#474747"></div>
<div class="r" style="left:1146px;top:227px"><b class="p">(</b><b class="o">¬</b>p   False<b class="p">)</b>   p</div>
<div class="r" style="left:1146px;top:252px"><b class="B">Alias</b> of <b class="rr">by_contradiction</b>.</div>
<div class="blk" style="left:6px;top:1002px;width:96px;height:25px;background:#5fad00"></div>
<div class="blk" style="left:102px;top:1002px;width:204px;height:25px;background:#d0d0d0"></div>
<svg class="ov" style="left:102px;top:1002px;" width="12" height="25" viewBox="0 0 12 25"><path d="M0 0 L12 12.5 L0 25 Z" fill="#5fad00"/></svg>
<svg class="ov" style="left:306px;top:1002px;" width="12" height="25" viewBox="0 0 12 25"><path d="M0 0 L12 12.5 L0 25 Z" fill="#d0d0d0"/></svg>
<div class="r" style="left:18px;top:1002px"><b class="sw">INSERT</b></div>
<svg class="ov" style="left:126px;top:1002px;" width="12" height="25" viewBox="0 0 12 25"><path d="M2.3 0 V13.5" fill="none" stroke="#5fad00" stroke-width="3"/><path d="M2.3 25 V19.5 Q2.3 16.8 5 15.2 Q7.8 13.6 7.8 11 V6" fill="none" stroke="#5fad00" stroke-width="2.6"/><path d="M4.8 7 L7.8 3 L10.8 7 Z" fill="#5fad00"/></svg>
<div class="r" style="left:150px;top:1002px"><b class="sg">master</b></div>
<svg class="ov" style="left:234px;top:1002px;" width="12" height="25" viewBox="0 0 12 25"><path d="M0.8 1 L11 12.5 L0.8 24" fill="none" stroke="#5fad00" stroke-width="1.5"/></svg>
<svg class="ov" style="left:258px;top:1002px;" width="12" height="25" viewBox="0 0 12 25"><circle cx="6" cy="12.3" r="4.3" fill="none" stroke="#d7005f" stroke-width="1"/><path d="M4.5 10.8 L7.5 13.8 M7.5 10.8 L4.5 13.8" stroke="#d7005f" stroke-width="1.1"/></svg>
<div class="r" style="left:282px;top:1002px"><b class="sr">2</b></div>
<div class="r" style="left:330px;top:1002px">test.lean [</div>
<div class="blk" style="left:1134px;top:1002px;width:72px;height:25px;background:#d0d0d0"></div>
<div class="blk" style="left:1206px;top:1002px;width:96px;height:25px;background:#5fad00"></div>
<svg class="ov" style="left:1194px;top:1002px;" width="12" height="25" viewBox="0 0 12 25"><path d="M12 0 L0 12.5 L12 25 Z" fill="#5fad00"/></svg>
<div class="r" style="left:1146px;top:1002px"><b class="sg">14%</b></div>
<div class="r" style="left:1242px;top:1002px"><b class="sw">8:35</b></div>
<div class="r" style="left:1326px;top:1002px"><b class="sx">curr [-]</b></div>
<div class="r" style="left:1854px;top:1002px"><b class="sx">1:1</b></div>
<div class="r" style="left:6px;top:1027px"><b class="B">-- INSERT --</b></div>
<div class="blk" style="left:6px;top:1052px;width:1908px;height:25px;background:#859900"></div>
<div class="r" style="left:6px;top:1052px"><b class="tm">[default] 1:nvim*</b></div>
<div class="r" style="left:1650px;top:1052px"><b class="tm">&quot;work&quot; 01:33 17-Jan-26</b></div>
</body></html>
